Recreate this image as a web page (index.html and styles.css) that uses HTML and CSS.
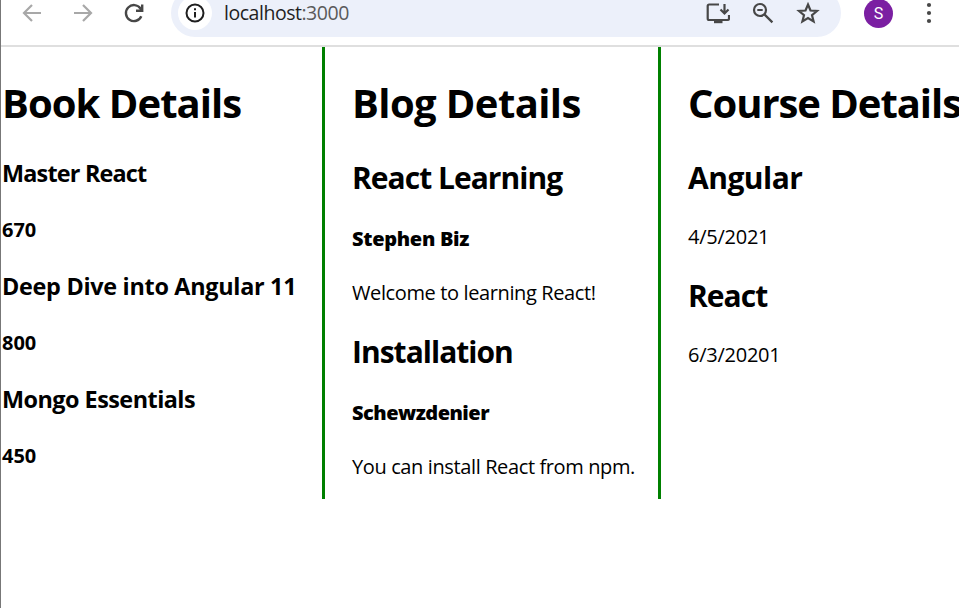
FILE: index.html
```html
<!DOCTYPE html>
<html lang="en">
<head>
<meta charset="utf-8">
<title>localhost:3000</title>
<link rel="stylesheet" href="styles.css">
</head>
<body>
<div class="window">
<header class="toolbar">
  <svg class="icon back" viewBox="0 0 24 24"><path d="M21 12H4M12 4l-8 8 8 8"/></svg>
  <svg class="icon forward" viewBox="0 0 24 24"><path d="M3 12h17M12 4l8 8-8 8"/></svg>
  <svg class="icon reload" viewBox="0 0 24 24"><path d="M19.3 15.2A8 8 0 1 1 18.5 7.5L20 9.3M20.2 3.5v6.2h-6.2"/></svg>
  <div class="omnibox">
    <span class="site-info"><svg class="icon info" viewBox="0 0 24 24"><circle cx="12" cy="12" r="8.5"/><path d="M12 11v5.5M12 7.3v2"/></svg></span>
    <span class="url">localhost<span class="port">:3000</span></span>
    <svg class="icon install" viewBox="0 0 24 24"><path d="M13 3.500H3.200a1.500 1.500 0 0 0-1.500 1.500v12.500a1.500 1.500 0 0 0 1.500 1.500h18.300a1.500 1.500 0 0 0 1.500-1.500V14M18.500 3v9M14.500 8.500l4 4 4-4"/><path class="solid" d="M8 19h8.500v3.200H8z"/></svg>
    <svg class="icon zoom" viewBox="0 0 24 24"><circle cx="9" cy="9" r="6"/><path d="M13.400 13.400l8 8M6.300 9h5.400"/></svg>
    <svg class="icon star" viewBox="0 0 24 24"><path d="M12 3.500l2.500 6 6.500.5-5 4.200 1.600 6.300-5.600-3.400-5.600 3.400L8 14.200 3 10l6.500-.5z"/></svg>
  </div>
  <span class="avatar">S</span>
  <svg class="icon menu" viewBox="0 0 24 24"><circle cx="12" cy="4" r="2.100"/><circle cx="12" cy="12" r="2.100"/><circle cx="12" cy="20" r="2.100"/></svg>
</header>
<main class="columns">
  <section class="column books">
    <h1>Book Details</h1>
    <h3 class="tight">Master React</h3>
    <h4>670</h4>
    <h3>Deep Dive into Angular 11</h3>
    <h4>800</h4>
    <h3 class="snug">Mongo Essentials</h3>
    <h4>450</h4>
  </section>
  <section class="column blogs">
    <h1>Blog Details</h1>
    <h2>React Learning</h2>
    <h4 class="author">Stephen Biz</h4>
    <p>Welcome to learning React!</p>
    <h2>Installation</h2>
    <h4 class="author snug">Schewzdenier</h4>
    <p>You can install React from npm.</p>
  </section>
  <section class="column courses">
    <h1>Course Details</h1>
    <h2 class="snug">Angular</h2>
    <p>4/5/2021</p>
    <h2>React</h2>
    <p>6/3/20201</p>
  </section>
</main>
</div>
</body>
</html>
```
FILE: styles.css
```css
* { box-sizing: border-box; }
body {
  margin: 0;
  background: #fff;
  color: #000;
  font-family: "Open Sans", "Noto Sans", sans-serif;
  overflow: hidden;
}
.window { height: 608px; border-left: 1px solid #777; }
.toolbar {
  height: 47px;
  display: flex;
  align-items: flex-start;
  border-bottom: 2px solid #dfdfdf;
  overflow: hidden;
}
.icon {
  width: 24px;
  height: 24px;
  flex: none;
  margin-top: 1px;
  fill: none;
  stroke: #474747;
  stroke-width: 2.2;
}
.back, .forward { stroke: #a8a8a8; }
.back { margin-left: 19px; }
.forward { margin-left: 27px; }
.reload { margin-left: 27px; stroke-width: 2.4; }
.omnibox {
  display: flex;
  align-items: flex-start;
  width: 670px;
  height: 48px;
  margin: -11px 0 0 25px;
  padding-top: 11px;
  border-radius: 24px;
  background: #ecf0fa;
}
.site-info {
  width: 34px;
  height: 34px;
  margin: -4px 0 0 7px;
  border-radius: 50%;
  background: #fff;
  display: flex;
  align-items: center;
  justify-content: center;
}
.info { margin: 0; stroke: #1f1f1f; stroke-width: 2; }
.url {
  width: 483px;
  margin-left: 12px;
  font-size: 19.5px;
  line-height: 26px;
  letter-spacing: -0.47px;
  color: #1f1f1f;
}
.port { color: #5a5a5a; }
.install { margin-left: -1px; }
.zoom { margin-left: 21px; }
.star { margin-left: 21px; }
.solid { fill: #474747; stroke: none; }
.avatar {
  width: 29px;
  height: 29px;
  margin: -1px 0 0 23px;
  border-radius: 50%;
  background: #7b1fa2;
  color: #fff;
  font: 16px/29px Roboto, sans-serif;
  text-align: center;
}
.menu { margin-left: 24px; fill: #474747; stroke: none; }
.columns { display: flex; align-items: stretch; height: 452px; }
.column { flex: none; white-space: nowrap; }
.books { width: 324px; padding-left: 1px; border-right: 3px solid green; }
.blogs { width: 336px; padding-left: 27px; border-right: 3px solid green; }
.courses { padding-left: 27px; }
h1, h2, h3, h4, p { margin: 0; }
h1 { font-size: 40px; line-height: 54px; padding-top: 29px; margin-bottom: 28px; letter-spacing: -0.95px; }
h2 { font-size: 30px; line-height: 40px; letter-spacing: -0.98px; }
h3 { font-size: 23.4px; line-height: 31px; margin-bottom: 27px; letter-spacing: -0.29px; }
h4 { font-size: 20px; line-height: 27px; margin-bottom: 28px; }
p { font-size: 20px; line-height: 27px; margin-bottom: 26px; letter-spacing: -0.38px; }
.author { font-weight: 800; margin: 27px 0; letter-spacing: -0.3px; }
.blogs h1 { letter-spacing: -0.6px; }
.courses h1 { letter-spacing: -1.05px; }
.courses h2 { margin-bottom: 25px; }
.courses p { letter-spacing: -0.25px; }
.snug { letter-spacing: -0.52px; }
.tight { letter-spacing: -0.8px; }
```
